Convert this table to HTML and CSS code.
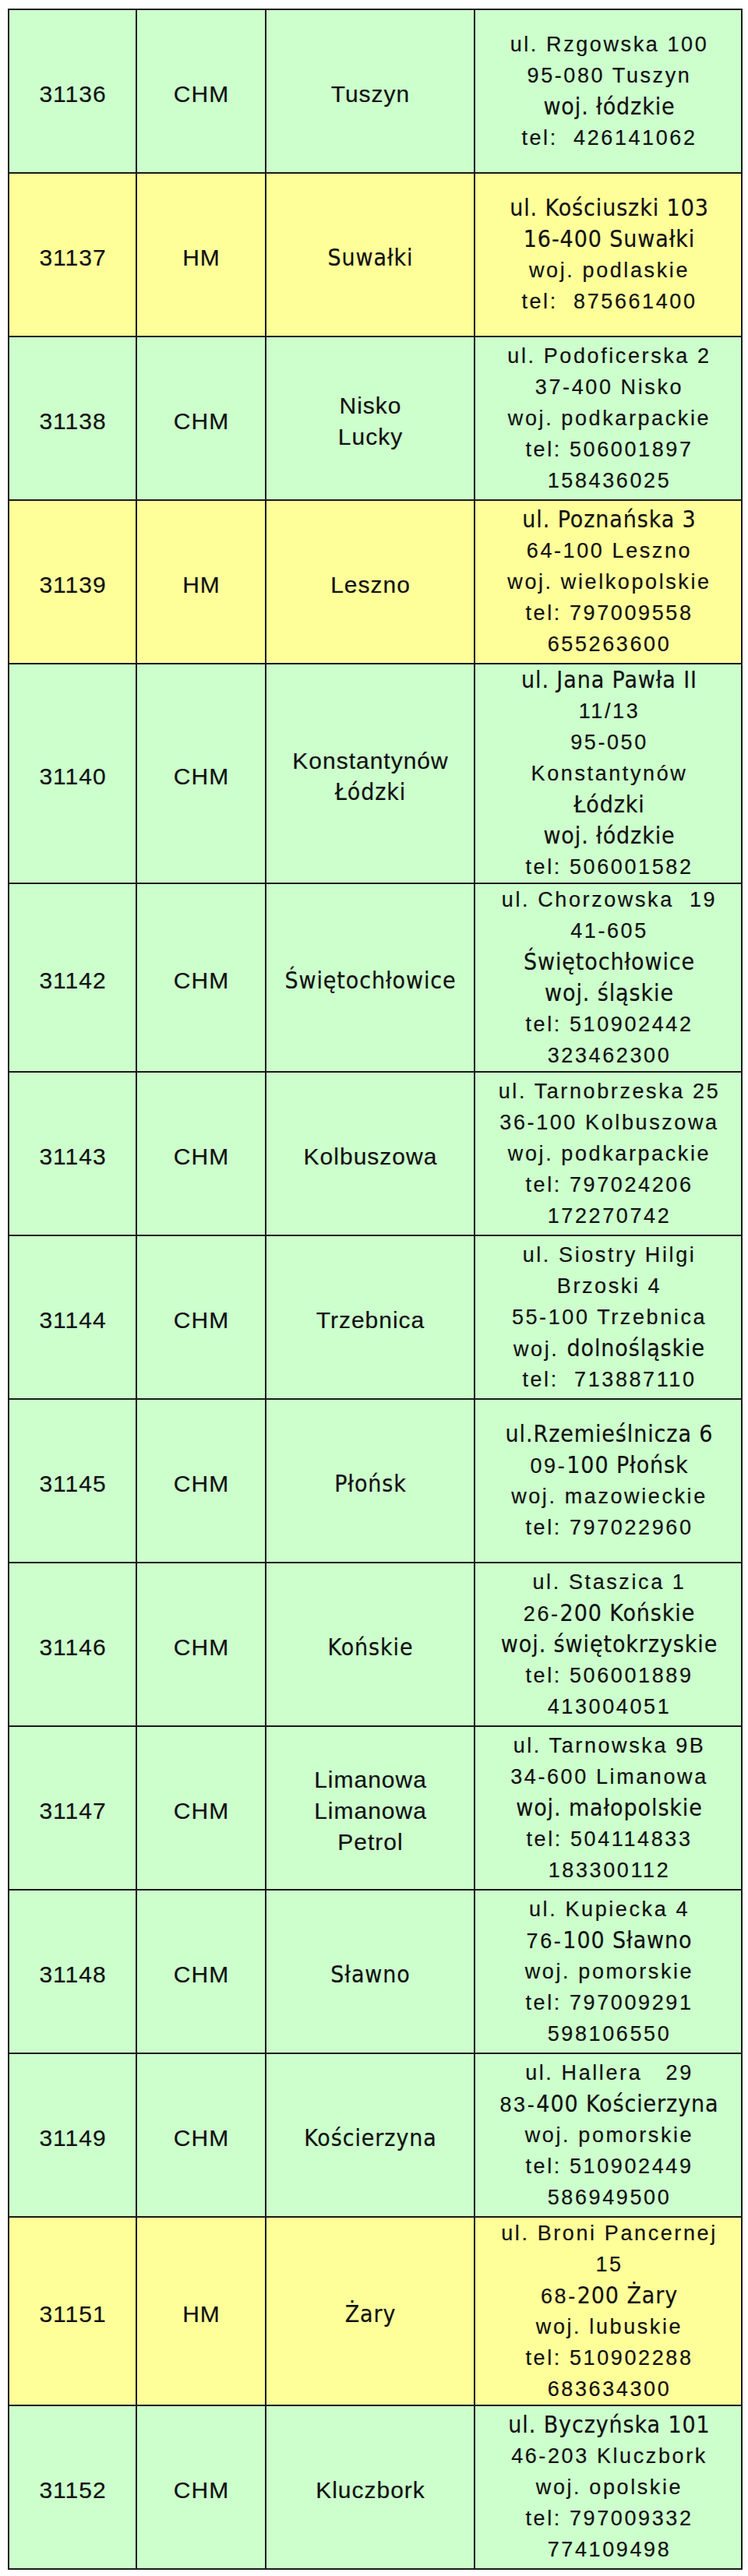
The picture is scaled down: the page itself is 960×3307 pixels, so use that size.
FILE: index.html
```html
<!DOCTYPE html>
<html lang="pl">
<head>
<meta charset="utf-8">
<title>Lista punktów</title>
<link rel="stylesheet" href="styles.css">
</head>
<body>
<table class="list">
  <colgroup>
    <col class="c-id">
    <col class="c-type">
    <col class="c-city">
    <col class="c-addr">
  </colgroup>
  <tbody>
    <tr class="g">
      <td>31136</td><td>CHM</td><td>Tuszyn</td>
      <td class="addr"><div>ul. Rzgowska 100</div><div>95-080 Tuszyn</div><div><span class="alt">woj. łódzkie</span></div><div>tel:  426141062</div></td>
    </tr>
    <tr class="y">
      <td>31137</td><td>HM</td><td><span class="alt">Suwałki</span></td>
      <td class="addr"><div><span class="alt">ul. Kościuszki 103</span></div><div><span class="alt">16-400 Suwałki</span></div><div>woj. podlaskie</div><div>tel:  875661400</div></td>
    </tr>
    <tr class="g">
      <td>31138</td><td>CHM</td><td><div>Nisko</div><div>Lucky</div></td>
      <td class="addr"><div>ul. Podoficerska 2</div><div>37-400 Nisko</div><div>woj. podkarpackie</div><div>tel: 506001897</div><div>158436025</div></td>
    </tr>
    <tr class="y">
      <td>31139</td><td>HM</td><td>Leszno</td>
      <td class="addr"><div><span class="alt">ul. Poznańska 3</span></div><div>64-100 Leszno</div><div>woj. wielkopolskie</div><div>tel: 797009558</div><div>655263600</div></td>
    </tr>
    <tr class="g">
      <td>31140</td><td>CHM</td><td><div>Konstantynów</div><div><span class="alt">Łódzki</span></div></td>
      <td class="addr"><div><span class="alt">ul. Jana Pawła II</span></div><div>11/13</div><div>95-050</div><div>Konstantynów</div><div><span class="alt">Łódzki</span></div><div><span class="alt">woj. łódzkie</span></div><div>tel: 506001582</div></td>
    </tr>
    <tr class="g">
      <td>31142</td><td>CHM</td><td><span class="alt">Świętochłowice</span></td>
      <td class="addr"><div>ul. Chorzowska  19</div><div>41-605</div><div><span class="alt">Świętochłowice</span></div><div><span class="alt">woj. śląskie</span></div><div>tel: 510902442</div><div>323462300</div></td>
    </tr>
    <tr class="g">
      <td>31143</td><td>CHM</td><td>Kolbuszowa</td>
      <td class="addr"><div>ul. Tarnobrzeska 25</div><div>36-100 Kolbuszowa</div><div>woj. podkarpackie</div><div>tel: 797024206</div><div>172270742</div></td>
    </tr>
    <tr class="g">
      <td>31144</td><td>CHM</td><td>Trzebnica</td>
      <td class="addr"><div>ul. Siostry Hilgi</div><div>Brzoski 4</div><div>55-100 Trzebnica</div><div>woj. <span class="alt">dolnośląskie</span></div><div>tel:  713887110</div></td>
    </tr>
    <tr class="g">
      <td>31145</td><td>CHM</td><td><span class="alt">Płońsk</span></td>
      <td class="addr"><div><span class="alt">ul.Rzemieślnicza 6</span></div><div>09-<span class="alt">100 Płońsk</span></div><div>woj. mazowieckie</div><div>tel: 797022960</div></td>
    </tr>
    <tr class="g">
      <td>31146</td><td>CHM</td><td><span class="alt">Końskie</span></td>
      <td class="addr"><div>ul. Staszica 1</div><div>26-<span class="alt">200 Końskie</span></div><div><span class="alt">woj. świętokrzyskie</span></div><div>tel: 506001889</div><div>413004051</div></td>
    </tr>
    <tr class="g">
      <td>31147</td><td>CHM</td><td><div>Limanowa</div><div>Limanowa</div><div>Petrol</div></td>
      <td class="addr"><div>ul. Tarnowska 9B</div><div>34-600 Limanowa</div><div><span class="alt">woj. małopolskie</span></div><div>tel: 504114833</div><div>183300112</div></td>
    </tr>
    <tr class="g">
      <td>31148</td><td>CHM</td><td><span class="alt">Sławno</span></td>
      <td class="addr"><div>ul. Kupiecka 4</div><div>76-<span class="alt">100 Sławno</span></div><div>woj. pomorskie</div><div>tel: 797009291</div><div>598106550</div></td>
    </tr>
    <tr class="g">
      <td>31149</td><td>CHM</td><td><span class="alt">Kościerzyna</span></td>
      <td class="addr"><div>ul. Hallera   29</div><div>83-<span class="alt">400 Kościerzyna</span></div><div>woj. pomorskie</div><div>tel: 510902449</div><div>586949500</div></td>
    </tr>
    <tr class="y">
      <td>31151</td><td>HM</td><td><span class="alt">Żary</span></td>
      <td class="addr"><div>ul. Broni Pancernej</div><div>15</div><div>68-<span class="alt">200 Żary</span></div><div>woj. lubuskie</div><div>tel: 510902288</div><div>683634300</div></td>
    </tr>
    <tr class="g">
      <td>31152</td><td>CHM</td><td>Kluczbork</td>
      <td class="addr"><div><span class="alt">ul. Byczyńska 101</span></div><div>46-203 Kluczbork</div><div>woj. opolskie</div><div>tel: 797009332</div><div>774109498</div></td>
    </tr>
  </tbody>
</table>
</body>
</html>
```

FILE: styles.css
```css
html, body {
  margin: 0;
  padding: 0;
  background: #ffffff;
}

.list {
  margin: 11px 0 0 10px;
  width: 943px;
  table-layout: fixed;
  border-collapse: collapse;
  font-family: "Liberation Sans", Arial, sans-serif;
  font-size: 30px;
  letter-spacing: 1px;
  color: #111111;
  -webkit-text-stroke: 0.2px #111111;
}

.c-id { width: 164px; }
.c-type { width: 166px; }
.c-city { width: 268px; }
.c-addr { width: 343px; }

.list tr {
  height: 210px;
}

.list td {
  border: 2px solid #1a1a1a;
  padding: 7px 0 0 1px;
  text-align: center;
  vertical-align: middle;
  line-height: 40px;
  white-space: pre;
  overflow: visible;
}

.list td.addr {
  padding: 0 0 0 3px;
  font-size: 27px;
  letter-spacing: 2.6px;
}

.list td div {
  height: 40px;
  line-height: 40px;
}

.g td { background: #ccffcc; }
.y td { background: #ffff99; }

.alt {
  font-family: "DejaVu Sans Condensed", "DejaVu Sans", sans-serif;
  font-size: 30px;
  letter-spacing: 0.9px;
  line-height: 40px;
}
```
